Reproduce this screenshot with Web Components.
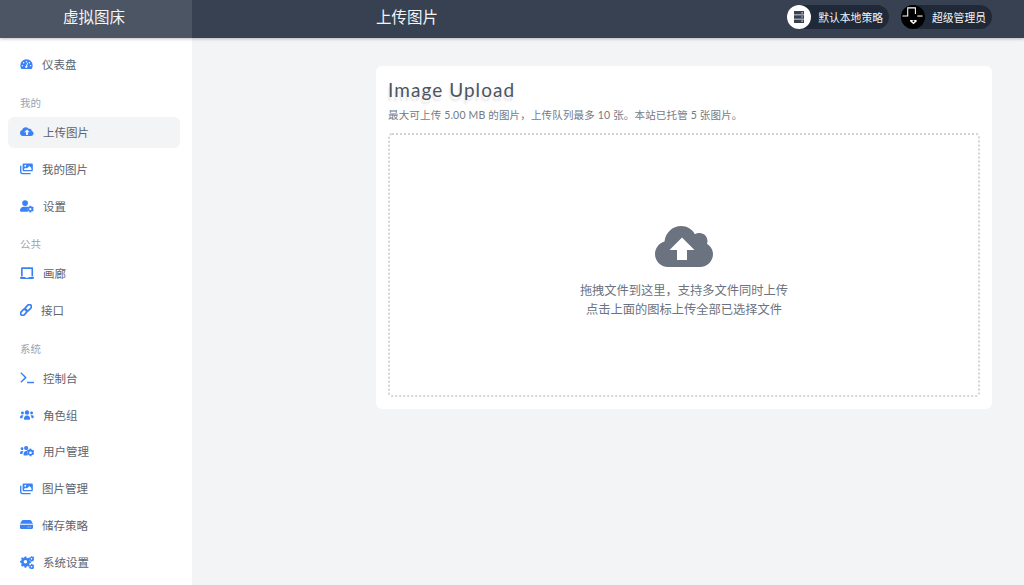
<!DOCTYPE html>
<html lang="zh">
<head>
<meta charset="utf-8">
<title>上传图片</title>
<style>
  html,body{margin:0;height:100%;overflow:hidden;}
  body{font-family:"Liberation Sans","Noto Sans CJK SC",sans-serif;background:#f3f4f6;}
</style>
</head>
<body>
<app-shell>
  <top-bar slot="top"></top-bar>
  <side-nav slot="side"></side-nav>
  <upload-card></upload-card>
</app-shell>
<script>
const FONT = '"Noto Sans CJK SC",sans-serif';
const ICONS = {
  gauge: '<path fill-rule="evenodd" d="M8 1.500A7.600 7.600 0 0 0 .4 9.100c0 1.500.4 2.800 1.100 4 .2.3.5.4.8.4h11.400c.3 0 .6-.1.8-.4.7-1.200 1.100-2.500 1.100-4A7.600 7.600 0 0 0 8 1.500zM8 3.600a.9.9 0 1 1 0 1.800.9.9 0 0 1 0-1.800zM3 10.300a.9.9 0 1 1 0-1.800.9.9 0 0 1 0 1.800zm1.500-3.500a.9.9 0 1 1 0-1.800.9.9 0 0 1 0 1.800zM8 12.300a1.500 1.500 0 0 1-.6-2.900l1.700-3.600.8.300-1.200 3.600A1.500 1.500 0 0 1 8 12.300zm3.500-5.500a.9.900 0 1 1 0-1.800.9.900 0 0 1 0 1.800zm1.500 3.500a.9.900 0 1 1 0-1.800.9.900 0 0 1 0 1.800z"/>',
  cloud: '<path d="M6.700 2.500c1.500 0 2.800.8 3.500 2 .3-.2.700-.3 1.100-.3 1.100 0 2 .9 2 2 0 .2 0 .4-.1.600 1.300.3 2.300 1.400 2.300 2.800 0 1.600-1.300 2.900-2.900 2.900H3.500C1.600 12.500 0 10.900 0 9c0-1.500 1-2.900 2.500-3.300.2-1.800 2.100-3.200 4.200-3.200zM8 5 4.800 8.300h2.100v3h2.200v-3h2.100z" fill-rule="evenodd"/>',
  images: '<path fill-rule="evenodd" d="M4.500 1.800h10c.7 0 1.300.6 1.300 1.300v7c0 .7-.6 1.300-1.300 1.300h-10c-.7 0-1.300-.6-1.300-1.300v-7c0-.7.6-1.300 1.300-1.300zm2 1.700a1.200 1.200 0 1 0 0 2.400 1.200 1.200 0 0 0 0-2.400zM5 9.700h9V7.500l-2.500-2.700-3 3.300-1.200-1.100L5 8.300z"/><path d="M1.700 4.500v7.300c0 .9.700 1.700 1.600 1.700h9.800v1.500H3c-1.700 0-3-1.300-3-3V4.500z"/>',
  usercog: '<circle cx="5.800" cy="4.600" r="3.300"/><path d="M0 13.200c0-2.500 2-4.300 4.400-4.300h2.800c.6 0 1.100.1 1.600.3-.2 1-.2 2 .2 3l-.3.200c-.3.600-.1 1.600.4 2.100H1.200C.5 14.500 0 14 0 13.200z"/><path fill-rule="evenodd" d="M12.700 7.600l.3 1 .9.400.9-.4 1 1.600-.8.700v1l.8.700-1 1.600-.9-.4-.9.500-.3 1h-1.800l-.2-1-.9-.500-1 .4-.9-1.600.8-.7v-1l-.8-.7.9-1.600 1 .4.900-.4.200-1zm-.9 2.800a1.200 1.200 0 1 0 0 2.400 1.200 1.200 0 0 0 0-2.400z"/>',
  laptop: '<path fill-rule="evenodd" d="M2.200 1.500h11.600c.7 0 1.200.5 1.200 1.200V12h-1.900V3.300H3.100V12H1.200V2.700c0-.7.400-1.200 1-1.200z"/><path d="M0 12.500h5.800l.5.900h3.400l.5-.9H16v1c0 .8-.6 1.300-1.300 1.300H1.300C.6 14.800 0 14.300 0 13.500z"/>',
  link: '<g fill="none" stroke="#3b82f6" stroke-width="2.400" transform="rotate(-45 8 8)"><rect x="-1" y="5.200" width="9.500" height="5.600" rx="2.800"/><rect x="7.500" y="5.200" width="9.500" height="5.600" rx="2.800"/></g>',
  term: '<path d="M.4 2.600l1-1.100 6 5.500v1l-6 5.500-1-1.100L5.300 7.500z"/><rect x="8" y="12.300" width="8" height="1.800" rx=".3"/>',
  users: '<circle cx="8" cy="5.200" r="2.500"/><circle cx="2.800" cy="5.700" r="1.700"/><circle cx="13.200" cy="5.700" r="1.700"/><path d="M4.500 12.500c0-2.300 1.300-4 3-4h1c1.700 0 3 1.700 3 4 0 .5-.3.800-.8.800H5.300c-.5 0-.8-.3-.8-.8z"/><path d="M0 10.700c0-1.400.9-2.300 2-2.300h1c.3 0 .6.100.9.200-.7.800-1.100 1.900-1.200 3.100H.6c-.4 0-.6-.3-.6-1zM16 10.700c0-1.400-.9-2.300-2-2.300h-1c-.3 0-.6.100-.9.200.7.800 1.100 1.900 1.200 3.100h1.300c.4 0 .6-.3.600-1z"/>',
  userscog: '<circle cx="7" cy="4.600" r="2.400"/><circle cx="2.300" cy="5.400" r="1.600"/><path d="M0 10.500c0-1.400.9-2.400 2-2.400h1c.3 0 .6.100.8.200-.6.800-1 1.800-1.100 3H.6c-.4 0-.6-.3-.6-.8zM4 12c0-2.200 1.300-3.900 3-3.900h1.200c-.3 1.300-.3 3 .4 5H4.800C4.300 13.100 4 12.600 4 12z"/><path fill-rule="evenodd" d="M13 5.500l.3 1.100 1 .5 1-.4 1 1.700-.8.700v1.200l.8.700-1 1.700-1-.4-1 .5-.3 1.100h-2l-.3-1.100-1-.5-1 .4-1-1.700.8-.7V8.600L7.700 8l1-1.700 1 .4 1-.5.300-1.100zm-1 3a1.500 1.500 0 1 0 0 3 1.500 1.500 0 0 0 0-3z"/>',
  hdd: '<path fill-rule="evenodd" d="M3.800 2.500h8.400c.7 0 1.300.3 1.700.9l2 3.700H.1l2-3.700c.4-.6 1-.9 1.700-.9zM0 8.200h16v3.900c0 .8-.6 1.400-1.400 1.400H1.400C.6 13.500 0 12.900 0 12.100zm10.500 2.400h-.9v1h.9zm2.500 0h-.9v1h.9z"/>',
  cogs: '<path fill-rule="evenodd" d="M7 2.500l.4 1.600 1.300.6 1.500-.8 1.300 1.400-.9 1.400.5 1.300 1.600.5v1.900l-1.600.5-.5 1.300.9 1.400-1.300 1.400-1.500-.8-1.300.6-.4 1.600H5l-.4-1.600-1.300-.6-1.500.8L.5 13.100l.9-1.400-.5-1.300L-.700 9.900V8l1.600-.5.500-1.300-.9-1.400 1.300-1.400 1.500.8 1.300-.6L5 2.500zM6 6.800a2.200 2.200 0 1 0 0 4.400 2.200 2.200 0 0 0 0-4.400z" transform="translate(.7 -.5) scale(.92)"/><path fill-rule="evenodd" d="M14.200.8l.2.900.7.300.8-.4.600.8-.5.700.2.700.8.300-.1 1-.9.100-.4.700.4.800-.8.600-.7-.6-.8.100-.4.800-1-.2v-.9l-.6-.5-.9.200-.4-.9.700-.6v-.8l-.7-.6.500-.9.900.3.700-.4.200-.9zm-.7 2.500a.9.900 0 1 0 0 1.800.9.900 0 0 0 0-1.800z" transform="translate(-.3 .2)"/><path fill-rule="evenodd" d="M14.200 9.800l.2.900.7.300.8-.4.600.8-.5.700.2.700.8.300-.1 1-.9.100-.4.700.4.800-.8.600-.7-.6-.8.100-.4.800-1-.2v-.9l-.6-.5-.9.200-.4-.9.700-.6v-.8l-.7-.6.500-.9.900.3.700-.4.200-.9zm-.7 2.500a.9.900 0 1 0 0 1.800.9.900 0 0 0 0-1.800z" transform="translate(-.3 .2)"/>'
};

class AppShell extends HTMLElement {
  constructor() {
    super();
    this.attachShadow({ mode: "open" });
    this.shadowRoot.innerHTML = `
      <style>
        :host{display:grid;grid-template-rows:38px 1fr;height:585px;width:1024px;overflow:hidden;}
        .top{grid-row:1;box-shadow:0 1px 3px rgba(0,0,0,.25);z-index:2;}
        .body{display:grid;grid-template-columns:192px 1fr;min-height:0;}
        main{padding:28px 32px 0 184px;}
      </style>
      <div class="top"><slot name="top"></slot></div>
      <div class="body">
        <slot name="side"></slot>
        <main><slot></slot></main>
      </div>
    `;
  }
}
customElements.define("app-shell", AppShell);

class TopBar extends HTMLElement {
  constructor() {
    super();
    this.attachShadow({ mode: "open" });
    this.shadowRoot.innerHTML = `
      <style>
        :host{display:grid;grid-template-columns:192px 1fr auto;height:38px;align-items:center;color:#fff;
          font-family:${FONT};background:#374151;}
        .brand{height:38px;background:#4b5563;display:flex;align-items:center;justify-content:center;font-size:15.500px;color:#f3f4f6;padding-right:4px;padding-bottom:6px;box-sizing:border-box;}
        .title{font-size:15.500px;padding-left:184px;padding-bottom:6px;color:#f3f4f6;}
        .pills{display:flex;gap:12px;padding-right:32px;padding-bottom:4px;}
        .pill{display:flex;align-items:center;height:24px;border-radius:12px;background:#1f2937;font-size:10.800px;padding-right:6px;color:#f3f4f6;gap:7px;}
        .av{width:24px;height:24px;border-radius:50%;display:flex;align-items:center;justify-content:center;}
      </style>
      <div class="brand">虚拟图床</div>
      <div class="title">上传图片</div>
      <div class="pills">
        <div class="pill">
          <span class="av" style="background:#fff">
            <svg width="12" height="14" viewBox="0 0 12 14" fill="#374151"><path fill-rule="evenodd" d="M1 1h10v3.600H1zM8.500 2.200v1.200h1.200V2.200zM1 5.200h10v3.600H1zM8.500 6.400v1.200h1.200V6.400zM1 9.400h10V13H1zM8.500 10.600v1.200h1.200v-1.200z"/></svg>
          </span>默认本地策略
        </div>
        <div class="pill">
          <span class="av" style="background:#000">
            <svg width="24" height="24" viewBox="0 0 25 25" fill="none" stroke="#fff" stroke-width="1.100"><path d="M1.500 11.500H7V3h8v6.500"/><path d="M17 11.500h5.500"/><path d="M9.500 15.500h6.500l.5 1.500-3.500 3-3.500-3z" fill="#fff" stroke="none"/><circle cx="13" cy="17" r="1" fill="#000" stroke="none"/></svg>
          </span>超级管理员
        </div>
      </div>
    `;
  }
}
customElements.define("top-bar", TopBar);

class NavItem extends HTMLElement {
  connectedCallback() {
    if (this.shadowRoot) return;
    const w = this.getAttribute("w") || 14;
    this.attachShadow({ mode: "open" });
    this.shadowRoot.innerHTML = `
      <style>
        :host{display:flex;align-items:center;height:30.750px;margin:0 12px 0 8px;padding-left:12px;border-radius:6px;
          font-size:11.500px;color:#5b6470;gap:9px;}
        :host([active]){background:#f3f4f6;}
        svg{width:${w}px;height:${w}px;fill:#3b82f6;flex:none;}
      </style>
      <svg viewBox="0 0 16 16">${ICONS[this.getAttribute("icon")]}</svg><slot></slot>
    `;
  }
}
customElements.define("nav-item", NavItem);

class NavGroup extends HTMLElement {
  constructor() {
    super();
    this.attachShadow({ mode: "open" });
    this.shadowRoot.innerHTML = `
      <style>
        :host{display:flex;flex-direction:column;gap:6px;}
        .label{font-size:10.500px;color:#9ca3af;padding-left:20px;line-height:16px;}
      </style>
      <div class="label" part="label"></div>
      <slot></slot>
    `;
  }
  connectedCallback() {
    const l = this.shadowRoot.querySelector(".label");
    if (this.hasAttribute("label")) l.textContent = this.getAttribute("label");
    else l.remove();
  }
}
customElements.define("nav-group", NavGroup);

class SideNav extends HTMLElement {
  constructor() {
    super();
    this.attachShadow({ mode: "open" });
    this.shadowRoot.innerHTML = `
      <style>
        :host{display:flex;flex-direction:column;gap:15px;background:#fff;padding-top:11px;font-family:${FONT};overflow:hidden;}
      </style>
      <nav-group>
        <nav-item icon="gauge" w="13">仪表盘</nav-item>
      </nav-group>
      <nav-group label="我的">
        <nav-item icon="cloud">上传图片</nav-item>
        <nav-item icon="images" w="13">我的图片</nav-item>
        <nav-item icon="usercog">设置</nav-item>
      </nav-group>
      <nav-group label="公共">
        <nav-item icon="laptop">画廊</nav-item>
        <nav-item icon="link" w="12">接口</nav-item>
      </nav-group>
      <nav-group label="系统">
        <nav-item icon="term">控制台</nav-item>
        <nav-item icon="users">角色组</nav-item>
        <nav-item icon="userscog">用户管理</nav-item>
        <nav-item icon="images" w="13">图片管理</nav-item>
        <nav-item icon="hdd" w="13">储存策略</nav-item>
        <nav-item icon="cogs">系统设置</nav-item>
      </nav-group>
    `;
    this.shadowRoot.querySelector('[icon="cloud"]').setAttribute("active", "");
  }
}
customElements.define("side-nav", SideNav);

class UploadCard extends HTMLElement {
  constructor() {
    super();
    this.attachShadow({ mode: "open" });
    this.shadowRoot.innerHTML = `
      <style>
        :host{display:block;background:#fff;border-radius:6px;padding:11px 12px 12px;height:343px;box-sizing:border-box;font-family:${FONT};}
        h2{margin:0;font:400 19px/26px Lato,${FONT};letter-spacing:1.050px;color:#4b5563;text-shadow:-1px 4px 2px rgba(190,175,175,.35);}
        p{margin:3px 0 0;font:10.500px/18px Lato,${FONT};letter-spacing:.17px;color:#727a86;}
        .drop{margin-top:9px;height:264px;box-sizing:border-box;border:2px dotted #d1d5db;border-radius:4px;padding-top:14px;
          display:flex;flex-direction:column;align-items:center;justify-content:center;font-size:12.250px;line-height:18.500px;color:#6b7280;text-align:center;}
        svg{width:58px;height:41px;fill:#6b7280;margin-bottom:14px;}
      </style>
      <h2>Image Upload</h2>
      <p>最大可上传 5.00 MB 的图片，上传队列最多 10 张。本站已托管 5 张图片。</p>
      <div class="drop">
        <svg viewBox="0 0 58 41"><path fill-rule="evenodd" d="M13 41C5.800 41 0 35.200 0 28 0 22 4 17 9.500 15.400 10.500 6.800 17.500 0 26 0c6 0 11.300 3.200 14 8.200 1.200-.8 2.800-1.200 4.500-1.200C49 7 52.500 10.600 52.500 15c0 1-.2 2-.5 3 3.600 2 6 5.700 6 10 0 7.200-5.800 13-13 13zM27 11.500 14.500 24H22v10h10V24h7.500z"/></svg>
        <div>拖拽文件到这里，支持多文件同时上传</div>
        <div>点击上面的图标上传全部已选择文件</div>
      </div>
    `;
  }
}
customElements.define("upload-card", UploadCard);
</script>
</body>
</html>
